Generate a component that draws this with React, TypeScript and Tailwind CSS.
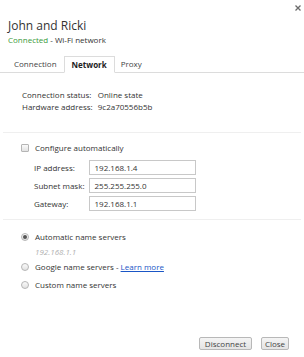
import React from 'react';

const font = { fontFamily: '"Open Sans", "Noto Sans", sans-serif' };

const Radio: React.FC<{ checked?: boolean }> = ({ checked }) => (
  <span className="w-[8px] h-[8px] rounded-full border border-[#b5b5b5] bg-gradient-to-b from-[#fafafa] to-[#e2e2e2] flex items-center justify-center shrink-0">
    {checked && <span className="w-[4px] h-[4px] rounded-full bg-[#555]"></span>}
  </span>
);

const Field: React.FC<{ label: string; value: string }> = ({ label, value }) => (
  <>
    <span className="text-[#333] leading-[15px]">{label}</span>
    <div className="w-[107px] h-[15px] border border-[#c8c8c8] px-[4px] leading-[13px] text-[#333]">{value}</div>
  </>
);

export default function App() {
  return (
    <div style={font} className="w-[304px] h-[357px] bg-white relative flex flex-col text-[8px] text-[#333]">
      {/* close */}
      <button className="absolute top-[4px] right-[3px] w-[7px] h-[7px] flex items-center justify-center">
        <svg width="6" height="6" viewBox="0 0 6 6">
          <path d="M0.5 0.5 L5.5 5.5 M5.5 0.5 L0.5 5.5" stroke="#6b6b6b" strokeWidth="1.3" />
        </svg>
      </button>

      {/* header */}
      <div className="px-[8px] pt-[18px]">
        <div className="text-[12px] leading-[16px] text-[#333]">John and Ricki</div>
        <div className="leading-[12px]">
          <span className="text-[#3b9a3b]">Connected</span> - Wi-Fi network
        </div>
      </div>

      {/* tabs */}
      <div className="mt-[10px] flex items-end px-[7px] border-b border-[#dcdcdc] h-[17px]">
        <div className="px-[7px] h-[16px] leading-[16px] text-[#444]">Connection</div>
        <div className="px-[7px] h-[17px] leading-[16px] font-bold text-[#222] bg-white border border-[#dcdcdc] border-b-white -mb-[1px]">Network</div>
        <div className="px-[6px] h-[16px] leading-[16px] text-[#444]">Proxy</div>
      </div>

      {/* info */}
      <div className="pt-[16px] px-[22px] grid grid-cols-[auto_1fr] gap-x-[5px] leading-[12px]">
        <span>Connection status:</span>
        <span>Online state</span>
        <span>Hardware address:</span>
        <span>9c2a70556b5b</span>
      </div>

      <div className="mt-[19px] mx-[3px] border-t border-[#efefef]"></div>

      {/* ip config */}
      <div className="mt-[9px] px-[21px]">
        <label className="flex items-center gap-[6px] leading-[12px]">
          <span className="w-[8px] h-[8px] rounded-[1px] border border-[#b5b5b5] bg-gradient-to-b from-[#fafafa] to-[#e2e2e2] shrink-0"></span>
          <span>Configure automatically</span>
        </label>
        <div className="mt-[6px] pl-[13px] grid grid-cols-[auto_auto] justify-start gap-x-[5px] gap-y-[3px]">
          <Field label="IP address:" value="192.168.1.4" />
          <Field label="Subnet mask:" value="255.255.255.0" />
          <Field label="Gateway:" value="192.168.1.1" />
        </div>
      </div>

      <div className="mt-[8px] mx-[3px] border-t border-[#efefef]"></div>

      {/* name servers */}
      <div className="mt-[11px] px-[21px] flex flex-col">
        <label className="flex items-center gap-[6px] leading-[12px]">
          <Radio checked />
          <span>Automatic name servers</span>
        </label>
        <div className="pl-[14px] mt-[3px] leading-[12px] italic text-[#b0b0b0]">192.168.1.1</div>
        <label className="mt-[3px] flex items-center gap-[6px] leading-[12px]">
          <Radio />
          <span>
            Google name servers - <a className="text-[#1a56c6] underline">Learn more</a>
          </span>
        </label>
        <label className="mt-[6px] flex items-center gap-[6px] leading-[12px]">
          <Radio />
          <span>Custom name servers</span>
        </label>
      </div>

      {/* footer */}
      <div className="mt-auto pb-[7px] pr-[15px] flex justify-end gap-[9px]">
        <button className="w-[53px] h-[13px] leading-[11px] rounded-[2px] border border-[#b8b8b8] bg-gradient-to-b from-[#f4f4f4] to-[#e4e4e4] text-[#444]">Disconnect</button>
        <button className="w-[28px] h-[13px] leading-[11px] rounded-[2px] border border-[#b8b8b8] bg-gradient-to-b from-[#f4f4f4] to-[#e4e4e4] text-[#444]">Close</button>
      </div>
    </div>
  );
}
